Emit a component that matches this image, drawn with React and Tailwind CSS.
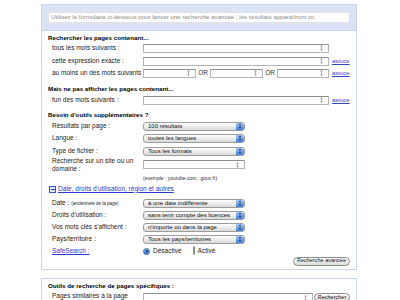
import React from 'react';

const font = { fontFamily: '"Liberation Sans", Arial, sans-serif' };

// tiny up/down glyph that the old Safari text fields show at the right edge
const Grip = () => (
  <svg width="3" height="6" viewBox="0 0 3 6" className="shrink-0">
    <path d="M1.5 0.5V5.5M0.3 1.6L1.5 0.4L2.7 1.6M0.3 4.4L1.5 5.6L2.7 4.4" stroke="#9a9a9a" strokeWidth="0.8" fill="none" />
  </svg>
);

const Field = ({ className = '' }) => (
  <div className={`h-[9px] border border-[#b4b4b4] border-t-[#8f8f8f] bg-white flex items-center justify-end pr-[5px] ${className}`}>
    <Grip />
  </div>
);

const Select = ({ value }) => (
  <div className="w-[102px] h-[9px] rounded-[3px] border border-[#9c9c9c] bg-linear-to-b from-white to-[#d9d9d9] flex items-center justify-between overflow-hidden">
    <span className="pl-[4px] text-[6px] leading-none text-[#111] whitespace-nowrap">{value}</span>
    <span className="w-[8px] h-full shrink-0 bg-linear-to-b from-[#a9cdf6] to-[#3b7fd9] flex flex-col items-center justify-center">
      <svg width="4" height="6" viewBox="0 0 4 6">
        <path d="M0.5 2.2L2 0.6L3.5 2.2ZM0.5 3.8L2 5.4L3.5 3.8Z" fill="#1d2f5a" />
      </svg>
    </span>
  </div>
);

const Astuce = () => (
  <a className="ml-[3px] text-[6px] leading-none text-[#3344cc] underline">astuce</a>
);

const Row = ({ label, children, className = '' }) => (
  <div className={`h-[10px] flex items-center pl-[10px] ${className}`}>
    <span className="w-[91px] shrink-0 text-[6.5px] leading-none text-[#1a1a1a] whitespace-nowrap">{label}</span>
    {children}
  </div>
);

const Heading = ({ children, className = '' }) => (
  <div className={`h-[10px] flex items-center pl-[6px] text-[6.2px] font-bold leading-none text-black whitespace-nowrap ${className}`}>
    {children}
  </div>
);

const Radio = ({ on }) =>
  on ? (
    <span className="w-[7px] h-[7px] rounded-full bg-linear-to-b from-[#8fc0f3] to-[#2c6fd0] border border-[#3b6db3] flex items-center justify-center">
      <span className="w-[2px] h-[2px] rounded-full bg-[#10203f]" />
    </span>
  ) : (
    <span className="w-[7px] h-[7px] rounded-full bg-linear-to-b from-white to-[#dedede] border border-[#8d8d8d]" />
  );

const Button = ({ children, className = '' }) => (
  <button className={`h-[9px] rounded-full border border-[#8c8c8c] bg-linear-to-b from-white to-[#dadada] text-[5.5px] leading-none text-[#111] px-0 whitespace-nowrap flex items-center justify-center ${className}`}>
    {children}
  </button>
);

export default function App() {
  return (
    <div className="w-[400px] h-[300px] overflow-hidden bg-white" style={font}>
      <div className="ml-[41px] mt-[4px] w-[316px]">
        {/* header band */}
        <div className="h-[27px] bg-[#dae2f5] border border-[#cad5ef] flex items-center px-[6px]">
          <div className="w-full h-[11px] bg-white border border-[#e3e3e3] flex items-center pl-[2px] text-[6.1px] leading-none text-[#8a8a8a] whitespace-nowrap">
            Utilisez le formulaire ci-dessous pour lancer une recherche avancée ; les résultats apparaîtront ici.
          </div>
        </div>

        {/* main panel */}
        <div className="border-x border-b border-[#cad5ef] pt-[2px] pb-[3px]">
          <Heading>Rechercher les pages contenant...</Heading>
          <Row label="tous les mots suivants :">
            <Field className="w-[186px]" />
          </Row>
          <Row label="cette expression exacte :" className="mt-[3px]">
            <Field className="w-[186px]" />
            <Astuce />
          </Row>
          <Row label="au moins un des mots suivants :" className="mt-[2px]">
            <Field className="w-[53px]" />
            <span className="w-[14px] text-center text-[6.5px] leading-none text-[#333]">OR</span>
            <Field className="w-[53px]" />
            <span className="w-[14px] text-center text-[6.5px] leading-none text-[#333]">OR</span>
            <Field className="w-[52px]" />
            <Astuce />
          </Row>

          <Heading className="mt-[6px]">Mais ne pas afficher les pages contenant...</Heading>
          <Row label="fun des mots suivants :" className="mt-[1px]">
            <Field className="w-[186px]" />
            <Astuce />
          </Row>

          <Heading className="mt-[5px]">Besoin d'outils supplémentaires ?</Heading>
          <Row label="Résultats par page :" className="mt-[1px]">
            <Select value="100 résultats" />
          </Row>
          <Row label="Langue :" className="mt-[2px]">
            <Select value="toutes les langues" />
          </Row>
          <Row label="Type de fichier :" className="mt-[3px]">
            <Select value="Tous les formats" />
          </Row>
          <div className="h-[16px] mt-[1px] flex items-start pl-[10px]">
            <span className="w-[91px] shrink-0 text-[6.5px] leading-[8px] text-[#1a1a1a]">
              Recherche sur un site ou un domaine :
            </span>
            <Field className="w-[102px] mt-[3px]" />
          </div>
          <div className="h-[8px] mt-[1px] pl-[101px] flex items-center text-[5px] leading-none text-[#333]">
            (exemple : youtube.com, .gouv.fr)
          </div>

          <div className="h-[10px] mt-[2px] pl-[7px] flex items-center gap-[2px]">
            <span className="w-[7px] h-[7px] border border-[#3355cc] bg-[#dfe6fb] flex items-center justify-center">
              <span className="w-[4px] h-[1px] bg-[#2244bb]" />
            </span>
            <a className="text-[6.5px] leading-none text-[#2a3bd0] underline whitespace-nowrap">
              Date, droits d'utilisation, région et autres
            </a>
          </div>

          <Row
            label={
              <>
                Date : <span className="text-[4.5px]">(ancienneté de la page)</span>
              </>
            }
            className="mt-[4px]"
          >
            <Select value="à une date indifférente" />
          </Row>
          <Row label="Droits d'utilisation :" className="mt-[2px]">
            <Select value="sans tenir compte des licences" />
          </Row>
          <Row label="Vos mots clés s'affichent :" className="mt-[2px]">
            <Select value="n'importe où dans la page" />
          </Row>
          <Row label="Pays/territoire :" className="mt-[2px]">
            <Select value="Tous les pays/territoires" />
          </Row>
          <div className="h-[10px] mt-[2px] flex items-center pl-[10px]">
            <a className="w-[91px] shrink-0 text-[6.5px] leading-none text-[#2a3bd0] underline">SafeSearch :</a>
            <div className="flex items-center gap-[3px] text-[6.5px] leading-none text-[#1a1a1a]">
              <Radio on />
              <span>Désactivé</span>
              <span className="ml-[8px]"><Radio /></span>
              <span>Activé</span>
            </div>
          </div>
          <div className="h-[10px] flex items-center justify-end pr-[6px]">
            <Button className="w-[57px]">Recherche avancée</Button>
          </div>
        </div>

        {/* second panel */}
        <div className="mt-[8px] border border-[#cad5ef] pt-[2px] h-[40px]">
          <Heading>Outils de recherche de pages spécifiques :</Heading>
          <div className="h-[16px] mt-[1px] flex items-start pl-[10px]">
            <span className="w-[91px] shrink-0 text-[6.5px] leading-[8px] text-[#1a1a1a]">
              Pages similaires à la page suivante :
            </span>
            <Field className="w-[170px] mt-[1px]" />
            <Button className="w-[36px] ml-[1px] mt-[1px]">Rechercher</Button>
          </div>
        </div>
      </div>
    </div>
  );
}
